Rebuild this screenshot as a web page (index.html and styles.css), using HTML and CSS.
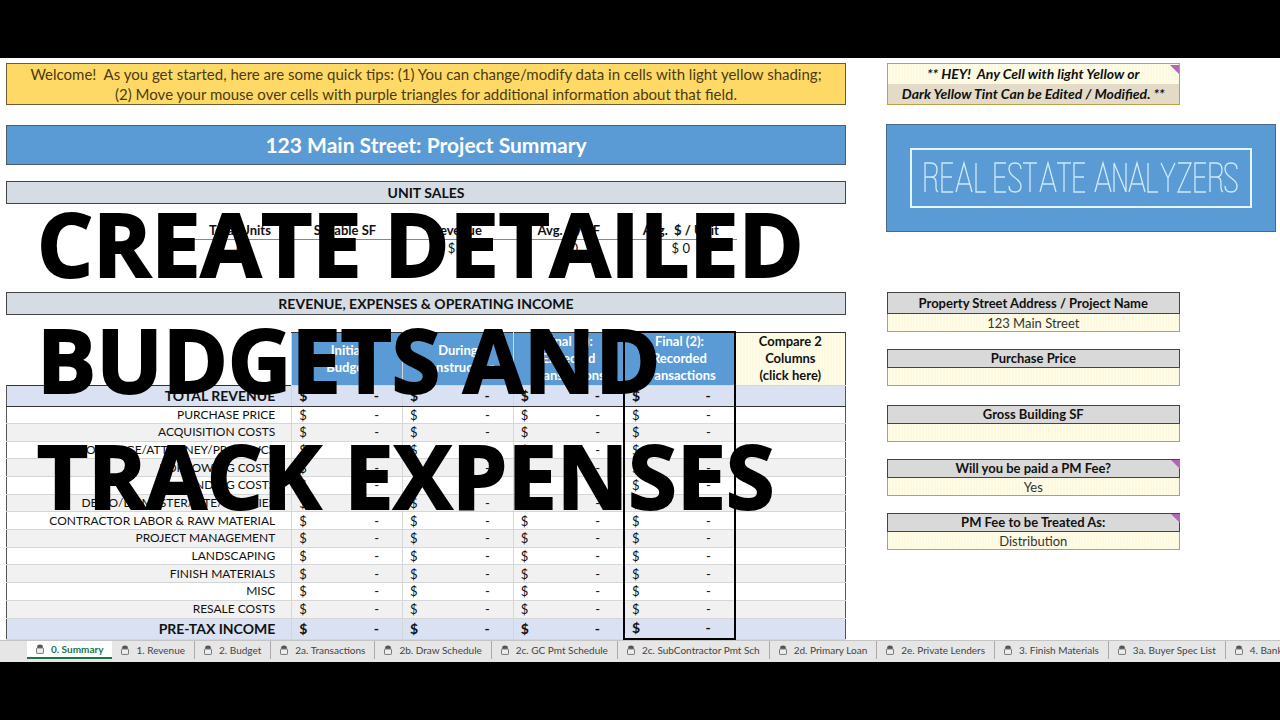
FILE: index.html
```html
<!DOCTYPE html>
<html lang="en">
<head>
<meta charset="utf-8">
<title>123 Main Street: Project Summary</title>
<link rel="stylesheet" href="styles.css">
</head>
<body>
<svg class="defs" aria-hidden="true">
  <symbol id="lock" viewBox="0 0 8 10">
    <path d="M1.2 4.5V2.6Q1.2 .4 4 .4T6.8 2.6V4.5Z" fill="#555"/>
    <rect x=".5" y="4" width="7" height="5.4" rx=".6" fill="#eee" stroke="#777" stroke-width="1"/>
  </symbol>
</svg>
<main class="sheet">
  <section class="main-col">
    <p class="welcome">Welcome!&nbsp; As you get started, here are some quick tips: (1) You can change/modify data in cells with light yellow shading;<br>(2) Move your mouse over cells with purple triangles for additional information about that field.</p>
    <h1 class="title">123 Main Street: Project Summary</h1>
    <h2 class="band">UNIT SALES</h2>
    <table class="units">
      <colgroup><col class="c-units"><col><col><col><col></colgroup>
      <thead><tr><th>Total Units</th><th>Sellable SF</th><th>Revenue</th><th>Avg. $ / SF</th><th>Avg.&nbsp; $ / Unit</th></tr></thead>
      <tbody><tr><td>0</td><td></td><td>$ 0</td><td>$ 0</td><td>$ 0</td></tr></tbody>
    </table>
    <h2 class="band">REVENUE, EXPENSES &amp; OPERATING INCOME</h2>
    <table class="finance">
      <colgroup><col class="c-label"><col><col><col><col><col></colgroup>
      <thead><tr><td class="blank"></td><th>Initial<br>Budget</th><th>During<br>Construction</th><th>Final (1):<br>Expected<br>Transactions</th><th class="picked">Final (2):<br>Recorded<br>Transactions</th><th class="compare">Compare 2<br>Columns<br>(click here)</th></tr></thead>
      <tbody id="rows"></tbody>
    </table>
  </section>
  <aside class="side-col">
    <p class="note corner"><span>** HEY!&nbsp; Any Cell with light Yellow or</span><span class="dark">Dark Yellow Tint Can be Edited / Modified. **</span></p>
    <div class="logo"><div class="logo-frame"><svg viewBox="3 3 338 56" role="img" aria-label="Real Estate Analyzers"><g class="strokes">
      <path d="M16 45V16H22Q28 16 28 23T22 30H16M22 30Q27 30 27 36V41Q27 44 29 45"/>
      <path d="M44 16H33V45H44M33 30H43"/>
      <path d="M47 45L55 16L63 45M50 37H61"/>
      <path d="M67 16V45H77"/>
      <path d="M97 16H86V45H97M86 30H96"/>
      <path d="M112 22Q112 16 106 16T100 22C100 31 112 31 112 39Q112 45 106 45T100 39"/>
      <path d="M114 16H128M121 16V45"/>
      <path d="M131 45L139 16L147 45M134 37H145"/>
      <path d="M148 16H162M155 16V45"/>
      <path d="M176 16H165V45H176M165 30H175"/>
      <path d="M186 45L194 16L202 45M189 37H200"/>
      <path d="M205 45V16L217 45V16"/>
      <path d="M220 45L228 16L236 45M223 37H234"/>
      <path d="M239 16V45H249"/>
      <path d="M252 16L259 31L266 16M259 31V45"/>
      <path d="M269 16H282L269 45H282"/>
      <path d="M297 16H286V45H297M286 30H296"/>
      <path d="M301 45V16H307Q313 16 313 23T307 30H301M307 30Q312 30 312 36V41Q312 44 314 45"/>
      <path d="M328 22Q328 16 322 16T316 22C316 31 328 31 328 39Q328 45 322 45T316 39"/>
    </g></svg></div></div>
    <form class="fields">
      <div class="field"><label for="addr">Property Street Address / Project Name</label><input id="addr" type="text" value="123 Main Street"></div>
      <div class="field"><label for="price">Purchase Price</label><input id="price" type="text"></div>
      <div class="field spaced"><label for="sf">Gross Building SF</label><input id="sf" type="text"></div>
      <div class="field corner"><label for="fee">Will you be paid a PM Fee?</label><select id="fee"><option>Yes</option><option>No</option></select></div>
      <div class="field corner"><label for="treat">PM Fee to be Treated As:</label><select id="treat"><option>Distribution</option></select></div>
    </form>
  </aside>
</main>
<nav class="tabs" id="tabs"></nav>
<p class="caption">CREATE DETAILED<br>BUDGETS AND<br>TRACK EXPENSES</p>
<script src="app.js"></script>
</body>
</html>
```
FILE: styles.css
```css
* { box-sizing: border-box; }
body {
  margin: 0;
  min-height: 100vh;
  padding-top: 58px;
  background: #000;
  color: #111;
  position: relative;
  overflow-x: hidden;
  font: 13px/18px Lato, "Liberation Sans", sans-serif;
}
h1, h2, p { margin: 0; }
.defs { position: absolute; width: 0; height: 0; }
.sheet {
  display: grid;
  grid-template-columns: 840fr 390fr;
  gap: 40px;
  padding: 5px 4px 0 6px;
  background: #fff;
}
.welcome {
  border: 1px solid #6b5c33;
  background: #ffd966;
  color: #4a3c12;
  font-size: 15px;
  line-height: 20px;
  padding-bottom: 1px;
  height: 42px;
  text-align: center;
  white-space: nowrap;
}
.title {
  margin: 20px 0 16px;
  border: 1px solid #4d5c6b;
  background: #5b9bd5;
  color: #fff;
  font-size: 21px;
  line-height: 38px;
  text-align: center;
}
.band {
  border: 1px solid #444;
  background: #d6dce4;
  font-size: 14px;
  line-height: 21px;
  text-align: center;
}
table { border-collapse: collapse; table-layout: fixed; }
.units { width: 65%; margin: 18px 0 35px 22%; text-align: center; }
.c-units { width: 18%; }
.units th { padding: 0; border-bottom: 1px solid #888; line-height: 17px; white-space: nowrap; }
.units td { padding: 0; line-height: 17px; }
.finance { width: 100%; height: 309px; margin-top: 16px; }
.c-label { width: 34%; }
.finance td, .finance th { padding: 0; line-height: 16px; border: 1px solid #d4d6d8; }
.finance thead th {
  height: 53px;
  background: #5b9bd5;
  color: #fff;
  line-height: 17px;
  border-top-color: #333;
}
.finance .blank { border: 0; }
.finance thead .compare { color: #111; border-right-color: #444; }
.finance tbody th {
  padding-right: 16px;
  border-left-color: #555;
  font-size: 12px;
  font-weight: 400;
  text-align: right;
  white-space: nowrap;
}
.finance tbody td:last-child { border-right-color: #555; }
.finance tbody tr:nth-child(odd) { background: #f1f1f1; }
.finance tbody .total, .finance tbody .total th { height: 21px; font-weight: 700; font-size: 14px; }
.finance tbody tr.total { background: #d9e1f2; }
.finance tbody .total th, .finance tbody .total td { border-top: 1px solid #333; }
.finance tbody .total:first-child th, .finance tbody .total:first-child td { border-bottom: 1px solid #333; }
.finance tbody tr .picked, .finance thead .picked { border-left: 2px solid #000; border-right: 2px solid #000; }
.finance thead .picked { border-top: 2px solid #000; }
.finance tbody tr:last-child .picked { border-bottom: 2px solid #000; }
.money { display: flex; justify-content: space-between; padding: 0 23px 0 7px; }
.finance thead .compare, .note, .field input, .field select {
  background: #fdfbe3 repeating-linear-gradient(90deg, #fefdeb 0 1px, #fcf9df 1px 3px);
}
.corner { position: relative; }
.corner::after {
  content: "";
  position: absolute;
  top: 1px;
  right: 0;
  border-top: 9px solid #b565b8;
  border-left: 9px solid transparent;
}
.note {
  width: 75%;
  margin-left: 1px;
  height: 42px;
  border: 1px solid #b9a548;
  font-size: 14px;
  font-weight: 700;
  font-style: italic;
  line-height: 20px;
  text-align: center;
  white-space: nowrap;
}
.note span { display: block; }
.note .dark { background: #e3dbc8; }
.logo {
  margin: 19px 0 60px;
  padding: 23px;
  border: 1px solid #4a6a8c;
  background: #5b9bd5;
}
.logo-frame { border: 2px solid #e4f4fb; }
.logo svg { display: block; width: 100%; height: 56px; }
.strokes { fill: none; stroke: #cfeaf8; stroke-width: 1.3; }
.fields { width: 75%; margin-left: 1px; display: grid; gap: 17px; }
.field { display: grid; }
.spaced { margin-top: 2px; }
.field label {
  border: 1px solid #444;
  background: #d9d9d9;
  font-weight: 700;
  line-height: 17px;
  text-align: center;
}
.field:first-child label { line-height: 20px; }
.field input, .field select {
  width: 100%;
  height: 18px;
  margin: 0;
  padding: 0;
  border: 1px solid #b9a548;
  border-top: 0;
  border-radius: 0;
  appearance: none;
  color: #333;
  font: inherit;
  text-align: center;
  text-align-last: center;
}
.tabs {
  display: flex;
  height: 22px;
  padding-left: 27px;
  border-top: 1px solid #c4c4c4;
  background: #e6e6e6;
  overflow: hidden;
}
.tab {
  display: flex;
  flex: none;
  align-items: center;
  gap: 7px;
  height: 18px;
  padding: 0 9px;
  border: 0;
  border-right: 1px solid #aaa;
  background: none;
  color: #444;
  font: 10px/16px Lato, sans-serif;
}
.tab svg { width: 8px; height: 10px; }
.tab.on { background: #fff; border-right: 0; border-bottom: 2px solid #217346; color: #217346; font-weight: 700; }
.caption {
  position: absolute;
  top: 185px;
  left: 37px;
  color: #000;
  font: 700 88px/116px "Open Sans", sans-serif;
  -webkit-text-stroke: 2px #000;
  white-space: nowrap;
  pointer-events: none;
}
```
FILE: app.js
```js
const labels = ["TOTAL REVENUE", "PURCHASE PRICE", "ACQUISITION COSTS", "BROKERAGE/ATTORNEY/PROF SVCS",
  "BORROWING COSTS", "LENDING COSTS", "DEMO/DUMPSTER/SITE/UTILITIES", "CONTRACTOR LABOR & RAW MATERIAL",
  "PROJECT MANAGEMENT", "LANDSCAPING", "FINISH MATERIALS", "MISC", "RESALE COSTS", "PRE-TAX INCOME"];
const body = document.getElementById("rows");
labels.forEach((text, i) => {
  const row = body.insertRow();
  if (i === 0 || i === labels.length - 1) row.className = "total";
  const head = document.createElement("th");
  head.scope = "row";
  head.textContent = text;
  row.append(head);
  for (let c = 0; c < 4; c++) {
    const cell = row.insertCell();
    if (c === 3) cell.className = "picked";
    cell.innerHTML = '<div class="money"><span>$</span><span>-</span></div>';
  }
  row.insertCell();
});
const names = ["0. Summary", "1. Revenue", "2. Budget", "2a. Transactions", "2b. Draw Schedule", "2c. GC Pmt Schedule",
  "2c. SubContractor Pmt Sch", "2d. Primary Loan", "2e. Private Lenders", "3. Finish Materials", "3a. Buyer Spec List", "4. Bank Draws"];
const nav = document.getElementById("tabs");
names.forEach((name, i) => {
  const tab = document.createElement("button");
  tab.type = "button";
  tab.className = i ? "tab" : "tab on";
  tab.innerHTML = '<svg aria-hidden="true"><use href="#lock"/></svg>' + name;
  nav.append(tab);
});
```
